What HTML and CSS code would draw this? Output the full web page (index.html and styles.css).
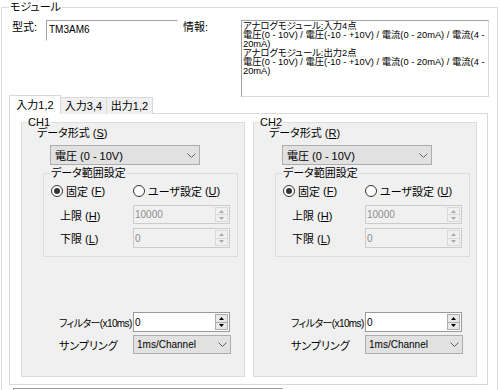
FILE: index.html
```html
<!DOCTYPE html>
<html lang="ja">
<head>
<meta charset="utf-8">
<title>モジュール</title>
<link rel="stylesheet" href="styles.css">
</head>
<body>
<fieldset class="module">
  <legend>モジュール</legend>
  <div class="top-row">
    <span class="lbl lbl-type">型式:</span>
    <div class="model">TM3AM6</div>
    <span class="lbl lbl-info">情報:</span>
    <div class="infobox">
      <span>アナログモジュール:入力4点</span>
      <span>電圧(0 - 10V) / 電圧(-10 - +10V) / 電流(0 - 20mA) / 電流(4 -</span>
      <span>20mA)</span>
      <span>アナログモジュール:出力2点</span>
      <span>電圧(0 - 10V) / 電圧(-10 - +10V) / 電流(0 - 20mA) / 電流(4 -</span>
      <span>20mA)</span>
    </div>
  </div>
  <div class="tabs">
    <div class="tab active">入力1,2</div>
    <div class="tab">入力3,4</div>
    <div class="tab">出力1,2</div>
  </div>
  <div class="panel">
    <fieldset class="ch">
      <legend>CH1</legend>
      <div class="fmt-label">データ形式 <span class="mn">(<u>S</u>)</span></div>
      <div class="combo fmt-combo"><span>電圧 (0 - 10V)</span><svg class="chev" width="9" height="5" viewBox="0 0 9 5"><path d="M0.5 0.5 L4.5 4.5 L8.5 0.5" fill="none" stroke="#606060"/></svg></div>
      <fieldset class="range">
        <legend>データ範囲設定</legend>
        <div class="radios">
          <span class="radio checked"><i></i>固定<span class="mn">(<u>F</u>)</span></span>
          <span class="radio"><i></i>ユーザ設定<span class="mn">(<u>U</u>)</span></span>
        </div>
        <div class="row r-hi"><span class="row-lbl">上限 <span class="mn">(<u>H</u>)</span></span>
          <div class="spin disabled"><span class="val">10000</span><div class="spin-btns"><span class="btn"><svg width="5" height="3" viewBox="0 0 5 3"><path d="M2.5 0 L5 3 L0 3Z"/></svg></span><span class="btn"><svg width="5" height="3" viewBox="0 0 5 3"><path d="M0 0 L5 0 L2.5 3Z"/></svg></span></div></div>
        </div>
        <div class="row r-lo"><span class="row-lbl">下限 <span class="mn">(<u>L</u>)</span></span>
          <div class="spin disabled"><span class="val">0</span><div class="spin-btns"><span class="btn"><svg width="5" height="3" viewBox="0 0 5 3"><path d="M2.5 0 L5 3 L0 3Z"/></svg></span><span class="btn"><svg width="5" height="3" viewBox="0 0 5 3"><path d="M0 0 L5 0 L2.5 3Z"/></svg></span></div></div>
        </div>
      </fieldset>
      <div class="row filter"><span class="ch-lbl filter-lbl">フィルター<span class="mn">(x10ms)</span></span>
        <div class="spin enabled"><span class="val">0</span><div class="spin-btns"><span class="btn"><svg width="5" height="3" viewBox="0 0 5 3"><path d="M2.5 0 L5 3 L0 3Z"/></svg></span><span class="btn"><svg width="5" height="3" viewBox="0 0 5 3"><path d="M0 0 L5 0 L2.5 3Z"/></svg></span></div></div>
      </div>
      <div class="row sampling"><span class="ch-lbl">サンプリング</span>
        <div class="combo samp-combo"><span class="val">1ms/Channel</span><svg class="chev" width="9" height="5" viewBox="0 0 9 5"><path d="M0.5 0.5 L4.5 4.5 L8.5 0.5" fill="none" stroke="#606060"/></svg></div>
      </div>
    </fieldset>
    <fieldset class="ch">
      <legend>CH2</legend>
      <div class="fmt-label">データ形式 <span class="mn">(<u>R</u>)</span></div>
      <div class="combo fmt-combo"><span>電圧 (0 - 10V)</span><svg class="chev" width="9" height="5" viewBox="0 0 9 5"><path d="M0.5 0.5 L4.5 4.5 L8.5 0.5" fill="none" stroke="#606060"/></svg></div>
      <fieldset class="range">
        <legend>データ範囲設定</legend>
        <div class="radios">
          <span class="radio checked"><i></i>固定<span class="mn">(<u>F</u>)</span></span>
          <span class="radio"><i></i>ユーザ設定<span class="mn">(<u>U</u>)</span></span>
        </div>
        <div class="row r-hi"><span class="row-lbl">上限 <span class="mn">(<u>H</u>)</span></span>
          <div class="spin disabled"><span class="val">10000</span><div class="spin-btns"><span class="btn"><svg width="5" height="3" viewBox="0 0 5 3"><path d="M2.5 0 L5 3 L0 3Z"/></svg></span><span class="btn"><svg width="5" height="3" viewBox="0 0 5 3"><path d="M0 0 L5 0 L2.5 3Z"/></svg></span></div></div>
        </div>
        <div class="row r-lo"><span class="row-lbl">下限 <span class="mn">(<u>L</u>)</span></span>
          <div class="spin disabled"><span class="val">0</span><div class="spin-btns"><span class="btn"><svg width="5" height="3" viewBox="0 0 5 3"><path d="M2.5 0 L5 3 L0 3Z"/></svg></span><span class="btn"><svg width="5" height="3" viewBox="0 0 5 3"><path d="M0 0 L5 0 L2.5 3Z"/></svg></span></div></div>
        </div>
      </fieldset>
      <div class="row filter"><span class="ch-lbl filter-lbl">フィルター<span class="mn">(x10ms)</span></span>
        <div class="spin enabled"><span class="val">0</span><div class="spin-btns"><span class="btn"><svg width="5" height="3" viewBox="0 0 5 3"><path d="M2.5 0 L5 3 L0 3Z"/></svg></span><span class="btn"><svg width="5" height="3" viewBox="0 0 5 3"><path d="M0 0 L5 0 L2.5 3Z"/></svg></span></div></div>
      </div>
      <div class="row sampling"><span class="ch-lbl">サンプリング</span>
        <div class="combo samp-combo"><span class="val">1ms/Channel</span><svg class="chev" width="9" height="5" viewBox="0 0 9 5"><path d="M0.5 0.5 L4.5 4.5 L8.5 0.5" fill="none" stroke="#606060"/></svg></div>
      </div>
    </fieldset>
  </div>
  <div class="below"></div>
</fieldset>
</body>
</html>
```

FILE: styles.css
```css
* { box-sizing: border-box; }
html, body { margin: 0; padding: 0; }
body {
  width: 500px;
  height: 390px;
  overflow: hidden;
  background: #ffffff;
  color: #000;
  font-family: "Liberation Sans", "Noto Sans CJK JP", sans-serif;
  font-size: 11px;
  font-feature-settings: "palt";
}
u { text-decoration: underline; text-underline-offset: 1px; }
.mn { font-family: "Liberation Sans", sans-serif; }

fieldset { margin: 0; min-width: 0; }
legend { padding: 0 1px; }

.module {
  margin: 0 2px 0 1px;
  padding: 6px 8px 0 7px;
  border: 1px solid #dcdcdc;
  height: 430px;
}
.module > legend { line-height: 14px; }

.top-row { display: flex; align-items: flex-start; height: 75px; }
.lbl { line-height: 14px; flex: none; }
.lbl-type { width: 37px; padding-left: 3px; }
.lbl-info { width: 63px; padding-left: 5px; }
.model {
  flex: none;
  width: 132px;
  height: 21px;
  border: 1px solid;
  border-color: #a0a0a0 transparent transparent #a0a0a0;
  background: #fff;
  padding: 2px 0 0 2px;
  font-size: 10px;
  line-height: 14px;
}
.infobox {
  flex: none;
  width: 248px;
  height: 77px;
  border: 1px solid;
  border-color: #a0a0a0 #dadada #dadada #a0a0a0;
  background: #fff;
  padding: 1px 0 0 1px;
  font-size: 9.3px;
  line-height: 9px;
  overflow: hidden;
}
.infobox span { display: block; white-space: nowrap; }

.tabs { display: flex; align-items: flex-end; height: 19px; }
.tab {
  height: 17px;
  width: 47px;
  margin-left: -1px;
  border: 1px solid #d9d9d9;
  border-bottom: none;
  background: #f0f0f0;
  text-align: center;
  line-height: 16px;
}
.tab.active {
  height: 19px;
  width: 52px;
  margin-left: 0;
  background: #fff;
  position: relative;
  z-index: 1;
  line-height: 18px;
}

.panel {
  margin: -1px 1px 0 0;
  border: 1px solid #d9d9d9;
  background: #fff;
  padding: 2px 10px 7px 11px;
  display: grid;
  grid-template-columns: 1fr 1fr;
  column-gap: 8px;
}

.ch {
  padding: 0 0 22px 0;
  border: 1px solid #dcdcdc;
  background: #f0f0f0;
}
.ch > legend { margin-left: 5px; line-height: 12px; }

.fmt-label { margin: -1px 0 0 15px; line-height: 12px; }

.combo {
  display: flex;
  align-items: center;
  justify-content: space-between;
  border: 1px solid #adadad;
  background: #e1e1e1;
}
.chev { flex: none; }
.fmt-combo { margin: 6px 0 0 28px; width: 150px; height: 20px; padding: 0 3px 0 4px; }

.range {
  margin: 2px 0 0 21px;
  width: 195px;
  padding: 0 0 8px 0;
  border: 1px solid #dcdcdc;
}
.range > legend { margin-left: 6px; line-height: 12px; }

.radios { display: flex; align-items: center; height: 14px; margin: 5px 0 0 7px; }
.radio { display: flex; align-items: center; gap: 3px; }
.radio:first-child { width: 82px; }
.radio i {
  width: 12px;
  height: 12px;
  border: 1px solid #333;
  border-radius: 50%;
  background: #fff;
  display: flex;
  align-items: center;
  justify-content: center;
}
.radio.checked i::after {
  content: "";
  width: 6px;
  height: 6px;
  border-radius: 50%;
  background: #333;
}

.row { display: flex; align-items: center; }
.row-lbl { width: 73px; flex: none; }
.range .row { margin-left: 16px; }
.r-hi { margin-top: 7px; }
.r-hi .spin { height: 19px; }
.r-lo { margin-top: 4px; }
.r-lo .spin { height: 20px; }

.spin {
  width: 97px;
  display: flex;
  align-items: stretch;
  border: 1px solid #bdbdbd;
}
.spin .val { flex: 1; padding-left: 1px; font-size: 10px; display: flex; align-items: center; }
.spin-btns { width: 14px; display: flex; flex-direction: column; padding: 1px 1px 1px 0; }
.btn { flex: 1; display: flex; align-items: center; justify-content: center; border: 1px solid; }
.btn + .btn { margin-top: -1px; }

.disabled { background: #f0f0f0; border-color: #cccccc; }
.disabled .val { color: #8d8d8d; }
.disabled .btn { border-color: #dadada; background: #f0f0f0; }
.disabled .btn svg { fill: #a8a8a8; }

.enabled { background: #fff; border-color: #9a9a9a; }
.enabled .btn { border-color: #adadad; background: #e8e8e8; }
.enabled .btn svg { fill: #000; }

.ch-lbl { width: 74px; flex: none; white-space: nowrap; }
.filter-lbl { font-size: 10px; letter-spacing: -0.6px; }
.filter { margin: 55px 0 0 37px; }
.filter .spin { height: 20px; }
.sampling { margin: 3px 0 0 37px; }
.samp-combo { width: 98px; height: 19px; padding: 0 3px 0 3px; }
.samp-combo .val { font-size: 10px; }

.below {
  margin: 3px 0 0 4px;
  width: 270px;
  height: 10px;
  border-top: 1px solid #a0a0a0;
  border-left: 1px solid #a0a0a0;
}
```
